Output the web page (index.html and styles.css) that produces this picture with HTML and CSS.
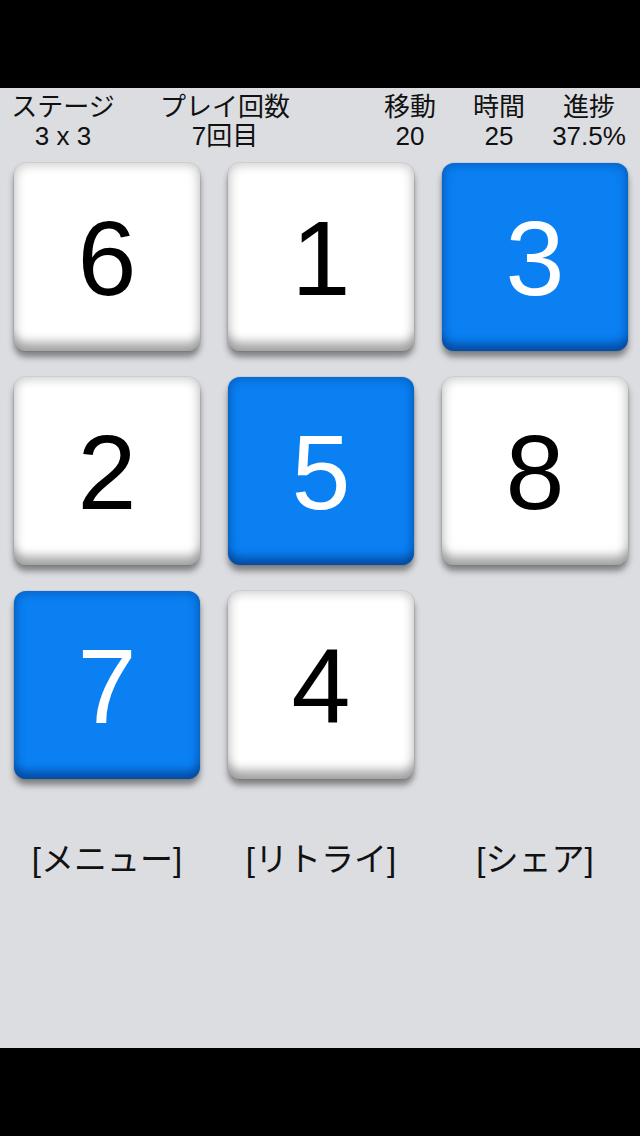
FILE: index.html
```html
<!DOCTYPE html>
<html lang="ja">
<head>
<meta charset="utf-8">
<link rel="stylesheet" href="styles.css">
</head>
<body>
<div class="screen">
  <div class="bar"></div>
  <main class="game">
    <header class="stats">
      <div class="stat s1"><span>ステージ</span><span>3 x 3</span></div>
      <div class="stat s2"><span>プレイ回数</span><span>7回目</span></div>
      <div class="stat s3"><span>移動</span><span>20</span></div>
      <div class="stat s4"><span>時間</span><span>25</span></div>
      <div class="stat s5"><span>進捗</span><span>37.5%</span></div>
    </header>
    <section class="board">
      <div class="tile">6</div>
      <div class="tile">1</div>
      <div class="tile on">3</div>
      <div class="tile">2</div>
      <div class="tile on">5</div>
      <div class="tile">8</div>
      <div class="tile on">7</div>
      <div class="tile">4</div>
    </section>
    <nav class="actions">
      <span class="btn">[メニュー]</span>
      <span class="btn">[リトライ]</span>
      <span class="btn">[シェア]</span>
    </nav>
  </main>
  <div class="bar"></div>
</div>
</body>
</html>
```
FILE: styles.css
```css
html, body {
  margin: 0;
  padding: 0;
  background: #000;
}
.screen {
  width: 640px;
  height: 1136px;
  display: flex;
  flex-direction: column;
  font-family: "Liberation Sans", "Noto Sans CJK JP", sans-serif;
}
.bar {
  height: 88px;
  background: #000;
  flex: none;
}
.game {
  flex: 1;
  background: #dcdde1;
  display: flex;
  flex-direction: column;
}
.stats {
  display: grid;
  grid-template-columns: 126px 198px 46px 80px 98px 82px;
  padding-top: 5px;
  height: 70px;
  color: #111;
  font-size: 26px;
  line-height: 29px;
}
.stat {
  display: flex;
  flex-direction: column;
  align-items: center;
  white-space: nowrap;
}
.s1 { grid-column: 1; }
.s2 { grid-column: 2; }
.s3 { grid-column: 4; }
.s4 { grid-column: 5; }
.s5 { grid-column: 6; }
.board {
  display: grid;
  grid-template-columns: repeat(3, 186px);
  grid-auto-rows: 188px;
  column-gap: 28px;
  row-gap: 26px;
  padding-left: 14px;
}
.tile {
  border-radius: 12px;
  background: #fff;
  display: flex;
  align-items: center;
  justify-content: center;
  font-size: 106px;
  color: #000;
  box-shadow:
    inset 0 -16px 10px -6px rgba(0,0,0,0.26),
    inset 0 0 10px 3px rgba(0,0,0,0.18),
    0 0 0 1px rgba(0,0,0,0.06),
    0 6px 6px rgba(0,0,0,0.42);
  padding-top: 2px;
  box-sizing: border-box;
}
.tile.on {
  background: #0a80f3;
  color: #fff;
  box-shadow:
    inset 0 -14px 10px -6px rgba(0,30,90,0.4),
    inset 0 0 10px 3px rgba(0,40,110,0.32),
    0 0 0 1px rgba(0,0,0,0.06),
    0 6px 6px rgba(0,0,0,0.42);
}
.actions {
  display: grid;
  grid-template-columns: repeat(3, 214px);
  padding-top: 54px;
  font-size: 33px;
  color: #111;
}
.btn {
  text-align: center;
  white-space: nowrap;
}
```
